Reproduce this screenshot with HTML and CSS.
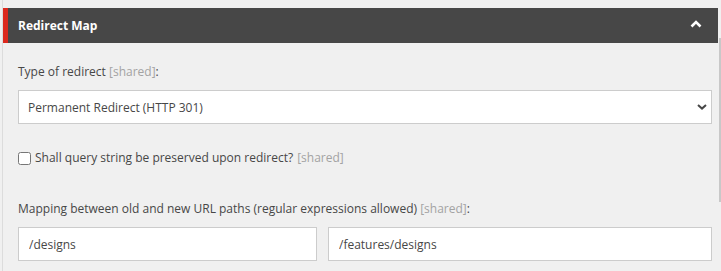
FILE: index.html
```html
<!DOCTYPE html>
<html lang="en">
  <head>
    <meta charset="UTF-8" />
    <title>Redirect Map</title>
    <link rel="stylesheet" href="styles.css">
  </head>
  <body>
    <div class="editor">
      <div class="section-header">
        <span class="section-title">Redirect Map</span>
        <svg class="toggle-icon" width="12" height="8" viewBox="0 0 12 8">
          <path d="M1.5 6.5 L6 2 L10.5 6.5" fill="none" stroke="#fff" stroke-width="2.6" />
        </svg>
      </div>

      <div class="section-body">
        <div class="field">
          <label class="field-label">Type of redirect <span class="shared">[shared]</span>:</label>
          <div class="select-wrap">
            <select class="field-select">
              <option>Permanent Redirect (HTTP 301)</option>
              <option>Temporary Redirect (HTTP 302)</option>
            </select>
            <svg class="select-arrow" width="10" height="6" viewBox="0 0 10 6">
              <path d="M1 1 L5 4.6 L9 1" fill="none" stroke="#474747" stroke-width="2" />
            </svg>
          </div>
        </div>

        <div class="field field-check">
          <label class="check-label">
            <input type="checkbox" class="check-box" />
            Shall query string be preserved upon redirect? <span class="shared">[shared]</span>
          </label>
        </div>

        <div class="field field-map">
          <label class="field-label">Mapping between old and new URL paths (regular expressions allowed) <span class="shared">[shared]</span>:</label>
          <div class="map-row">
            <input type="text" class="field-input" value="/designs" />
            <input type="text" class="field-input" value="/features/designs" />
          </div>
        </div>
      </div>
    </div>

    <div class="scroll-thumb"></div>
  </body>
</html>
```

FILE: styles.css
```css
* {
  margin: 0;
  padding: 0;
  box-sizing: border-box;
}

body {
  font-family: "Open Sans", sans-serif;
  font-size: 12px;
  color: #474747;
  background: #f0f0f0;
  height: 271px;
  overflow: hidden;
}

.editor {
  margin: 0 3px 0 2px;
  border-left: 1px solid #dcdcdc;
  padding-top: 8px;
  height: 100%;
}

.section-header {
  height: 35px;
  background: #474747;
  border-left: 5px solid #dc291e;
  padding: 0 16px 0 10px;
  display: flex;
  align-items: center;
  justify-content: space-between;
}

.section-title {
  color: #fff;
  font-size: 12px;
  font-weight: 700;
  line-height: 35px;
}

.toggle-icon {
  display: block;
  margin-top: -3px;
}

.section-body {
  padding: 20px 6px 0 15px;
}

.field-label {
  display: block;
  line-height: 18px;
  margin-bottom: 9px;
}

.shared {
  color: #a3a3a3;
}

.select-wrap {
  position: relative;
}

.field-select {
  appearance: none;
  -webkit-appearance: none;
  width: 100%;
  height: 34px;
  border: 1px solid #ccc;
  border-radius: 0;
  background: #fff;
  font-family: "Open Sans", sans-serif;
  font-size: 12px;
  color: #474747;
  padding: 0 30px 0 9px;
  outline: none;
}

.select-arrow {
  position: absolute;
  right: 5px;
  top: 14px;
  pointer-events: none;
}

.field-check {
  margin-top: 25px;
}

.check-label {
  display: flex;
  align-items: center;
  line-height: 18px;
}

.check-box {
  width: 13px;
  height: 13px;
  margin: 0 4px 0 0;
}

.check-label .shared {
  margin-left: 4px;
}

.field-map {
  margin-top: 33px;
}

.map-row {
  display: grid;
  grid-template-columns: 299px 1fr;
  gap: 11px;
}

.field-input {
  height: 34px;
  border: 1px solid #ccc;
  background: #fff;
  font-family: "Open Sans", sans-serif;
  font-size: 12px;
  color: #474747;
  padding: 0 10px;
  outline: none;
}

.scroll-thumb {
  position: absolute;
  right: 0;
  top: 38px;
  width: 2px;
  height: 164px;
  background: #c8c8c8;
}
```
